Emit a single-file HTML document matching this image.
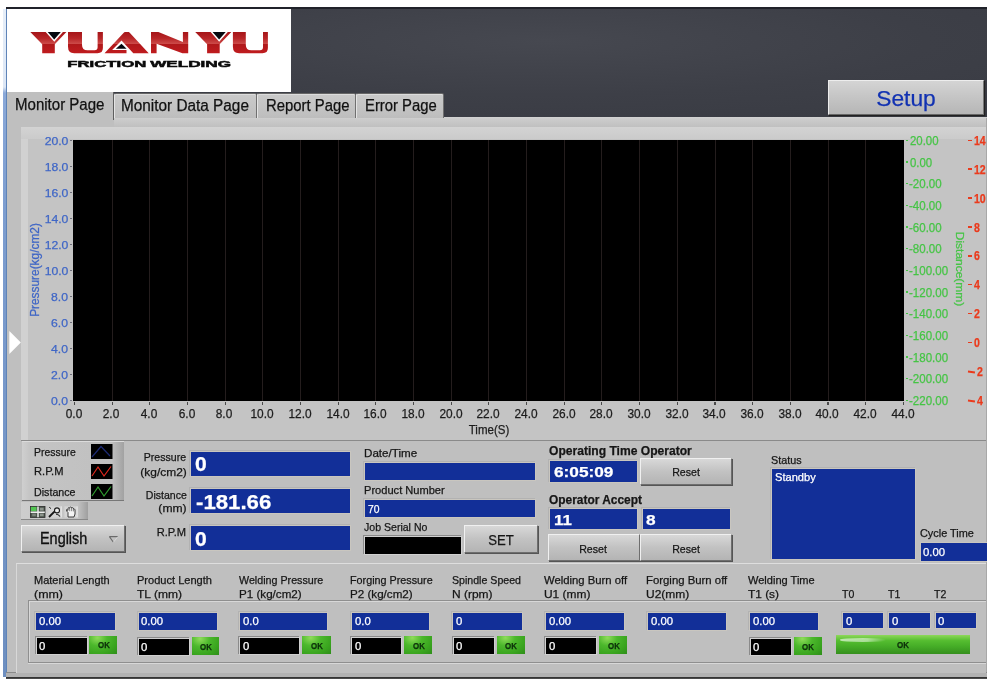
<!DOCTYPE html>
<html><head><meta charset="utf-8"><title>Yuan Yu Friction Welding</title>
<style>
html,body{margin:0;padding:0;background:#fff;}
body{width:990px;height:684px;position:relative;overflow:hidden;font-family:"Liberation Sans",sans-serif;}
div,span.t{position:absolute;box-sizing:border-box;}
span.t{white-space:nowrap;-webkit-text-stroke:0.25px currentColor;}
.blue{background:#122f98;box-shadow:0 0 0 1px #c9c6bf, -1px -1px 0 1px #b2b2b2;}
.blk{background:#000;box-shadow:0 0 0 1px #d0d0d0, -1px -1px 0 1px #8a8a8a;}
.btn{background:linear-gradient(#d8d8d8,#c2c2c2 50%,#b4b4b4);border:1px solid;border-color:#f0f0f0 #6e6e6e #6e6e6e #f0f0f0;box-shadow:1px 1px 0 #555;}
.ok{background:radial-gradient(ellipse at 30% 10%,#8fdc5a 0%,#4cb82c 35%,#3aa51f 70%,#2f8e1a 100%);}
.tab{background:linear-gradient(#cacaca,#c3c3c3 60%,#bdbdbd);border-left:1px solid #e4e4e4;border-top:1px solid #666;border-right:1px solid #707070;border-radius:2px 2px 0 0;box-shadow:inset 0 1px 0 #dcdcdc;}
#w{left:0;top:0;width:990px;height:684px;will-change:transform;filter:blur(0.45px);}
</style></head><body><div id="w">

<div class="" style="left:3.0px;top:9.0px;width:4.0px;height:668.0px;background:linear-gradient(#e6eef8 0px,#dde7f5 78px,#8aa8d8 84px,#7d9dcf 200px,#6e8fc0 100%);"></div>
<div class="" style="left:6.0px;top:9.0px;width:1.3px;height:668.0px;background:#5f84b8;"></div>
<div class="" style="left:6.0px;top:7.0px;width:981.3px;height:2.0px;background:#20222a;"></div>
<div class="" style="left:7.0px;top:9.0px;width:980.3px;height:108.0px;background:radial-gradient(ellipse at 55% 30%,#464850 0%,#3d3f47 50%,#383a42 100%);"></div>
<div class="" style="left:7.0px;top:9.0px;width:284.0px;height:83.3px;background:#fff;"></div>
<svg style="position:absolute;left:0;top:0" width="300" height="92" viewBox="0 0 300 92"><defs><linearGradient id="rg" x1="0" y1="32" x2="0" y2="53.4" gradientUnits="userSpaceOnUse"><stop offset="0" stop-color="#a51518"/><stop offset="0.3" stop-color="#b82628"/><stop offset="0.55" stop-color="#cc4a48"/><stop offset="0.58" stop-color="#b0181a"/><stop offset="1" stop-color="#c01c1f"/></linearGradient></defs><polygon points="30.3,32.0 45.7,32.0 54.3,41.7 62.9,32.0 66.4,32.0 54.8,44.2 54.8,53.3 42.2,53.3 42.2,44.2" fill="url(#rg)"/><polygon points="47.7,31.9 60.8,31.9 54.2,39.4" fill="#05080f"/><path d="M68.0,32 H82.0 V44.7 Q82.0,50.2 87.5,50.2 H94.6 Q97.6,50.2 97.6,47.2 V32 H102.9 V48 Q102.9,53.2 97.5,53.2 H74.2 Q68.0,53.2 68.0,46.8 Z" fill="url(#rg)"/><polygon points="104.5,53.3 124.0,32.4 124.9,32 128.7,32 129.5,32.4 148.7,53.3 133.3,53.3 121.5,40.4 112.1,50.0 126.5,50.0 126.5,53.3" fill="url(#rg)"/><polygon points="121.5,43.8 115.8,48.8 126.6,48.8" fill="#05080f"/><polygon points="151,32 158.4,32 182.9,41.9 182.9,32 188.2,32 188.2,53.3 182.4,53.3 156.6,43.7 156.6,53.3 151,53.3" fill="url(#rg)"/><polygon points="195.2,32.0 210.6,32.0 219.2,41.7 227.8,32.0 231.3,32.0 219.7,44.2 219.7,53.3 207.1,53.3 207.1,44.2" fill="url(#rg)"/><polygon points="212.6,31.9 225.7,31.9 219.1,39.4" fill="#05080f"/><path d="M232.9,32 H245.8 V44.7 Q245.8,50.2 251.3,50.2 H260.0 Q263.0,50.2 263.0,47.2 V32 H267.9 V48 Q267.9,53.2 262.5,53.2 H239.1 Q232.9,53.2 232.9,46.8 Z" fill="url(#rg)"/><text x="67.3" y="67.3" textLength="79" lengthAdjust="spacingAndGlyphs" font-family="Liberation Sans, sans-serif" font-weight="bold" font-size="9.6" fill="#0a0a0a" stroke="#0a0a0a" stroke-width="0.5">FRICTION</text><text x="150.2" y="67.3" textLength="80.8" lengthAdjust="spacingAndGlyphs" font-family="Liberation Sans, sans-serif" font-weight="bold" font-size="9.6" fill="#0a0a0a" stroke="#0a0a0a" stroke-width="0.5">WELDING</text></svg>
<div class="" style="left:7.0px;top:116.8px;width:980.3px;height:559.2px;background:#bfbfbf;"></div>
<div class="" style="left:7.0px;top:116.8px;width:980.3px;height:10.2px;background:linear-gradient(#d2d2d2 0,#cbcbcb 25%,#c0c0c0 100%);"></div>
<div class="" style="left:986.0px;top:118.0px;width:1.3px;height:558.0px;background:#a8a8a8;"></div>
<div class="" style="left:6.0px;top:672.0px;width:981.3px;height:1.0px;background:#8a8a8a;"></div>
<div class="" style="left:6.0px;top:673.0px;width:981.3px;height:3.5px;background:#b2b2b2;"></div>
<div class="" style="left:6.0px;top:676.5px;width:981.3px;height:2.0px;background:linear-gradient(#2a2a2a,#555);"></div>
<div class="" style="left:7.0px;top:92.3px;width:106.5px;height:34.7px;background:#bfbfbf;"></div>
<div class="" style="left:112.7px;top:92.3px;width:1.0px;height:28.2px;background:#5e5e5e;"></div>
<div class="tab" style="left:114.2px;top:93.0px;width:142.4px;height:25.0px;"></div>
<div class="tab" style="left:257.0px;top:93.0px;width:98.8px;height:25.0px;"></div>
<div class="tab" style="left:356.2px;top:93.0px;width:87.6px;height:25.0px;"></div>
<span class="t" style="left:14.5px;top:94.7px;font-size:16px;line-height:19.2px;color:#111;font-weight:normal;transform:scaleX(0.940);transform-origin:0 50%;">Monitor Page</span>
<span class="t" style="left:121.0px;top:96.2px;font-size:16px;line-height:19.2px;color:#111;font-weight:normal;transform:scaleX(0.959);transform-origin:0 50%;">Monitor Data Page</span>
<span class="t" style="left:265.5px;top:96.2px;font-size:16px;line-height:19.2px;color:#111;font-weight:normal;transform:scaleX(0.929);transform-origin:0 50%;">Report Page</span>
<span class="t" style="left:364.7px;top:96.2px;font-size:16px;line-height:19.2px;color:#111;font-weight:normal;transform:scaleX(0.927);transform-origin:0 50%;">Error Page</span>
<div class="" style="left:828.0px;top:79.5px;width:156.0px;height:35.5px;background:linear-gradient(#d4d4d4,#c6c6c6 45%,#b6b6b6);border:1px solid;border-color:#ededed #777 #666 #ededed;box-shadow:1px 1px 1px #222;"></div>
<span class="t" style="left:806.2px;width:200px;text-align:center;top:87.1px;font-size:21.5px;line-height:25.8px;color:#1232b2;font-weight:normal;transform:scaleX(1.059);transform-origin:50% 50%;">Setup</span>
<div class="" style="left:20.5px;top:127.0px;width:965.5px;height:314.0px;background:#c4c4c4;border-bottom:1px solid #8a8a8a;"></div>
<div class="" style="left:20.5px;top:127.0px;width:7.8px;height:313.0px;background:#d1d1d1;"></div>
<div class="" style="left:20.5px;top:127.0px;width:965.5px;height:12.0px;background:linear-gradient(#d3d3d3,#cbcbcb);"></div>
<div class="" style="left:73.1px;top:139.6px;width:831.1px;height:261.2px;background:#000;"></div>
<div class="" style="left:111.6px;top:139.6px;width:1.0px;height:261.2px;background:#241d1d;"></div>
<div class="" style="left:149.3px;top:139.6px;width:1.0px;height:261.2px;background:#241d1d;"></div>
<div class="" style="left:186.9px;top:139.6px;width:1.0px;height:261.2px;background:#241d1d;"></div>
<div class="" style="left:224.6px;top:139.6px;width:1.0px;height:261.2px;background:#241d1d;"></div>
<div class="" style="left:262.3px;top:139.6px;width:1.0px;height:261.2px;background:#241d1d;"></div>
<div class="" style="left:300.0px;top:139.6px;width:1.0px;height:261.2px;background:#241d1d;"></div>
<div class="" style="left:337.7px;top:139.6px;width:1.0px;height:261.2px;background:#241d1d;"></div>
<div class="" style="left:375.3px;top:139.6px;width:1.0px;height:261.2px;background:#241d1d;"></div>
<div class="" style="left:413.0px;top:139.6px;width:1.0px;height:261.2px;background:#241d1d;"></div>
<div class="" style="left:450.7px;top:139.6px;width:1.0px;height:261.2px;background:#241d1d;"></div>
<div class="" style="left:488.4px;top:139.6px;width:1.0px;height:261.2px;background:#241d1d;"></div>
<div class="" style="left:526.1px;top:139.6px;width:1.0px;height:261.2px;background:#241d1d;"></div>
<div class="" style="left:563.7px;top:139.6px;width:1.0px;height:261.2px;background:#241d1d;"></div>
<div class="" style="left:601.4px;top:139.6px;width:1.0px;height:261.2px;background:#241d1d;"></div>
<div class="" style="left:639.1px;top:139.6px;width:1.0px;height:261.2px;background:#241d1d;"></div>
<div class="" style="left:676.8px;top:139.6px;width:1.0px;height:261.2px;background:#241d1d;"></div>
<div class="" style="left:714.5px;top:139.6px;width:1.0px;height:261.2px;background:#241d1d;"></div>
<div class="" style="left:752.1px;top:139.6px;width:1.0px;height:261.2px;background:#241d1d;"></div>
<div class="" style="left:789.8px;top:139.6px;width:1.0px;height:261.2px;background:#241d1d;"></div>
<div class="" style="left:827.5px;top:139.6px;width:1.0px;height:261.2px;background:#241d1d;"></div>
<div class="" style="left:865.2px;top:139.6px;width:1.0px;height:261.2px;background:#241d1d;"></div>
<span class="t" style="right:922.1px;top:134.7px;font-size:11.5px;line-height:13.8px;color:#3f66c6;font-weight:normal;transform:scaleX(1.060);transform-origin:100% 50%;">20.0</span>
<div class="" style="left:69.8px;top:140.0px;width:1.8px;height:1.2px;background:#70707c;"></div>
<span class="t" style="right:922.1px;top:160.7px;font-size:11.5px;line-height:13.8px;color:#3f66c6;font-weight:normal;transform:scaleX(1.060);transform-origin:100% 50%;">18.0</span>
<div class="" style="left:69.8px;top:166.0px;width:1.8px;height:1.2px;background:#70707c;"></div>
<span class="t" style="right:922.1px;top:186.7px;font-size:11.5px;line-height:13.8px;color:#3f66c6;font-weight:normal;transform:scaleX(1.060);transform-origin:100% 50%;">16.0</span>
<div class="" style="left:69.8px;top:192.0px;width:1.8px;height:1.2px;background:#70707c;"></div>
<span class="t" style="right:922.1px;top:212.7px;font-size:11.5px;line-height:13.8px;color:#3f66c6;font-weight:normal;transform:scaleX(1.060);transform-origin:100% 50%;">14.0</span>
<div class="" style="left:69.8px;top:218.0px;width:1.8px;height:1.2px;background:#70707c;"></div>
<span class="t" style="right:922.1px;top:238.7px;font-size:11.5px;line-height:13.8px;color:#3f66c6;font-weight:normal;transform:scaleX(1.060);transform-origin:100% 50%;">12.0</span>
<div class="" style="left:69.8px;top:244.0px;width:1.8px;height:1.2px;background:#70707c;"></div>
<span class="t" style="right:922.1px;top:264.7px;font-size:11.5px;line-height:13.8px;color:#3f66c6;font-weight:normal;transform:scaleX(1.060);transform-origin:100% 50%;">10.0</span>
<div class="" style="left:69.8px;top:270.0px;width:1.8px;height:1.2px;background:#70707c;"></div>
<span class="t" style="right:922.1px;top:290.7px;font-size:11.5px;line-height:13.8px;color:#3f66c6;font-weight:normal;transform:scaleX(1.060);transform-origin:100% 50%;">8.0</span>
<div class="" style="left:69.8px;top:296.0px;width:1.8px;height:1.2px;background:#70707c;"></div>
<span class="t" style="right:922.1px;top:316.7px;font-size:11.5px;line-height:13.8px;color:#3f66c6;font-weight:normal;transform:scaleX(1.060);transform-origin:100% 50%;">6.0</span>
<div class="" style="left:69.8px;top:322.0px;width:1.8px;height:1.2px;background:#70707c;"></div>
<span class="t" style="right:922.1px;top:342.7px;font-size:11.5px;line-height:13.8px;color:#3f66c6;font-weight:normal;transform:scaleX(1.060);transform-origin:100% 50%;">4.0</span>
<div class="" style="left:69.8px;top:348.0px;width:1.8px;height:1.2px;background:#70707c;"></div>
<span class="t" style="right:922.1px;top:368.7px;font-size:11.5px;line-height:13.8px;color:#3f66c6;font-weight:normal;transform:scaleX(1.060);transform-origin:100% 50%;">2.0</span>
<div class="" style="left:69.8px;top:374.0px;width:1.8px;height:1.2px;background:#70707c;"></div>
<span class="t" style="right:922.1px;top:394.7px;font-size:11.5px;line-height:13.8px;color:#3f66c6;font-weight:normal;transform:scaleX(1.060);transform-origin:100% 50%;">0.0</span>
<div class="" style="left:69.8px;top:400.0px;width:1.8px;height:1.2px;background:#70707c;"></div>
<span class="t" style="left:-26.3px;width:200px;text-align:center;top:406.5px;font-size:12.5px;line-height:15.0px;color:#1c1c1c;font-weight:normal;transform:scaleX(0.950);transform-origin:50% 50%;">0.0</span>
<div class="" style="left:73.8px;top:401.6px;width:1.2px;height:3.8px;background:#4a4a4a;"></div>
<span class="t" style="left:11.4px;width:200px;text-align:center;top:406.5px;font-size:12.5px;line-height:15.0px;color:#1c1c1c;font-weight:normal;transform:scaleX(0.950);transform-origin:50% 50%;">2.0</span>
<div class="" style="left:111.5px;top:401.6px;width:1.2px;height:3.8px;background:#4a4a4a;"></div>
<span class="t" style="left:49.1px;width:200px;text-align:center;top:406.5px;font-size:12.5px;line-height:15.0px;color:#1c1c1c;font-weight:normal;transform:scaleX(0.950);transform-origin:50% 50%;">4.0</span>
<div class="" style="left:149.2px;top:401.6px;width:1.2px;height:3.8px;background:#4a4a4a;"></div>
<span class="t" style="left:86.7px;width:200px;text-align:center;top:406.5px;font-size:12.5px;line-height:15.0px;color:#1c1c1c;font-weight:normal;transform:scaleX(0.950);transform-origin:50% 50%;">6.0</span>
<div class="" style="left:186.8px;top:401.6px;width:1.2px;height:3.8px;background:#4a4a4a;"></div>
<span class="t" style="left:124.4px;width:200px;text-align:center;top:406.5px;font-size:12.5px;line-height:15.0px;color:#1c1c1c;font-weight:normal;transform:scaleX(0.950);transform-origin:50% 50%;">8.0</span>
<div class="" style="left:224.5px;top:401.6px;width:1.2px;height:3.8px;background:#4a4a4a;"></div>
<span class="t" style="left:162.1px;width:200px;text-align:center;top:406.5px;font-size:12.5px;line-height:15.0px;color:#1c1c1c;font-weight:normal;transform:scaleX(0.950);transform-origin:50% 50%;">10.0</span>
<div class="" style="left:262.2px;top:401.6px;width:1.2px;height:3.8px;background:#4a4a4a;"></div>
<span class="t" style="left:199.8px;width:200px;text-align:center;top:406.5px;font-size:12.5px;line-height:15.0px;color:#1c1c1c;font-weight:normal;transform:scaleX(0.950);transform-origin:50% 50%;">12.0</span>
<div class="" style="left:299.9px;top:401.6px;width:1.2px;height:3.8px;background:#4a4a4a;"></div>
<span class="t" style="left:237.5px;width:200px;text-align:center;top:406.5px;font-size:12.5px;line-height:15.0px;color:#1c1c1c;font-weight:normal;transform:scaleX(0.950);transform-origin:50% 50%;">14.0</span>
<div class="" style="left:337.6px;top:401.6px;width:1.2px;height:3.8px;background:#4a4a4a;"></div>
<span class="t" style="left:275.1px;width:200px;text-align:center;top:406.5px;font-size:12.5px;line-height:15.0px;color:#1c1c1c;font-weight:normal;transform:scaleX(0.950);transform-origin:50% 50%;">16.0</span>
<div class="" style="left:375.2px;top:401.6px;width:1.2px;height:3.8px;background:#4a4a4a;"></div>
<span class="t" style="left:312.8px;width:200px;text-align:center;top:406.5px;font-size:12.5px;line-height:15.0px;color:#1c1c1c;font-weight:normal;transform:scaleX(0.950);transform-origin:50% 50%;">18.0</span>
<div class="" style="left:412.9px;top:401.6px;width:1.2px;height:3.8px;background:#4a4a4a;"></div>
<span class="t" style="left:350.5px;width:200px;text-align:center;top:406.5px;font-size:12.5px;line-height:15.0px;color:#1c1c1c;font-weight:normal;transform:scaleX(0.950);transform-origin:50% 50%;">20.0</span>
<div class="" style="left:450.6px;top:401.6px;width:1.2px;height:3.8px;background:#4a4a4a;"></div>
<span class="t" style="left:388.2px;width:200px;text-align:center;top:406.5px;font-size:12.5px;line-height:15.0px;color:#1c1c1c;font-weight:normal;transform:scaleX(0.950);transform-origin:50% 50%;">22.0</span>
<div class="" style="left:488.3px;top:401.6px;width:1.2px;height:3.8px;background:#4a4a4a;"></div>
<span class="t" style="left:425.9px;width:200px;text-align:center;top:406.5px;font-size:12.5px;line-height:15.0px;color:#1c1c1c;font-weight:normal;transform:scaleX(0.950);transform-origin:50% 50%;">24.0</span>
<div class="" style="left:526.0px;top:401.6px;width:1.2px;height:3.8px;background:#4a4a4a;"></div>
<span class="t" style="left:463.5px;width:200px;text-align:center;top:406.5px;font-size:12.5px;line-height:15.0px;color:#1c1c1c;font-weight:normal;transform:scaleX(0.950);transform-origin:50% 50%;">26.0</span>
<div class="" style="left:563.6px;top:401.6px;width:1.2px;height:3.8px;background:#4a4a4a;"></div>
<span class="t" style="left:501.2px;width:200px;text-align:center;top:406.5px;font-size:12.5px;line-height:15.0px;color:#1c1c1c;font-weight:normal;transform:scaleX(0.950);transform-origin:50% 50%;">28.0</span>
<div class="" style="left:601.3px;top:401.6px;width:1.2px;height:3.8px;background:#4a4a4a;"></div>
<span class="t" style="left:538.9px;width:200px;text-align:center;top:406.5px;font-size:12.5px;line-height:15.0px;color:#1c1c1c;font-weight:normal;transform:scaleX(0.950);transform-origin:50% 50%;">30.0</span>
<div class="" style="left:639.0px;top:401.6px;width:1.2px;height:3.8px;background:#4a4a4a;"></div>
<span class="t" style="left:576.6px;width:200px;text-align:center;top:406.5px;font-size:12.5px;line-height:15.0px;color:#1c1c1c;font-weight:normal;transform:scaleX(0.950);transform-origin:50% 50%;">32.0</span>
<div class="" style="left:676.7px;top:401.6px;width:1.2px;height:3.8px;background:#4a4a4a;"></div>
<span class="t" style="left:614.3px;width:200px;text-align:center;top:406.5px;font-size:12.5px;line-height:15.0px;color:#1c1c1c;font-weight:normal;transform:scaleX(0.950);transform-origin:50% 50%;">34.0</span>
<div class="" style="left:714.4px;top:401.6px;width:1.2px;height:3.8px;background:#4a4a4a;"></div>
<span class="t" style="left:651.9px;width:200px;text-align:center;top:406.5px;font-size:12.5px;line-height:15.0px;color:#1c1c1c;font-weight:normal;transform:scaleX(0.950);transform-origin:50% 50%;">36.0</span>
<div class="" style="left:752.0px;top:401.6px;width:1.2px;height:3.8px;background:#4a4a4a;"></div>
<span class="t" style="left:689.6px;width:200px;text-align:center;top:406.5px;font-size:12.5px;line-height:15.0px;color:#1c1c1c;font-weight:normal;transform:scaleX(0.950);transform-origin:50% 50%;">38.0</span>
<div class="" style="left:789.7px;top:401.6px;width:1.2px;height:3.8px;background:#4a4a4a;"></div>
<span class="t" style="left:727.3px;width:200px;text-align:center;top:406.5px;font-size:12.5px;line-height:15.0px;color:#1c1c1c;font-weight:normal;transform:scaleX(0.950);transform-origin:50% 50%;">40.0</span>
<div class="" style="left:827.4px;top:401.6px;width:1.2px;height:3.8px;background:#4a4a4a;"></div>
<span class="t" style="left:765.0px;width:200px;text-align:center;top:406.5px;font-size:12.5px;line-height:15.0px;color:#1c1c1c;font-weight:normal;transform:scaleX(0.950);transform-origin:50% 50%;">42.0</span>
<div class="" style="left:865.1px;top:401.6px;width:1.2px;height:3.8px;background:#4a4a4a;"></div>
<span class="t" style="left:802.7px;width:200px;text-align:center;top:406.5px;font-size:12.5px;line-height:15.0px;color:#1c1c1c;font-weight:normal;transform:scaleX(0.950);transform-origin:50% 50%;">44.0</span>
<div class="" style="left:902.8px;top:401.6px;width:1.2px;height:3.8px;background:#4a4a4a;"></div>
<span class="t" style="left:389.0px;width:200px;text-align:center;top:422.5px;font-size:12.5px;line-height:15.0px;color:#1c1c1c;font-weight:normal;transform:scaleX(0.921);transform-origin:50% 50%;">Time(S)</span>
<span class="t" style="left:910.2px;top:133.8px;font-size:12px;line-height:14.4px;color:#45c445;font-weight:normal;transform:scaleX(0.950);transform-origin:0 50%;">20.00</span>
<div class="" style="left:906.3px;top:139.7px;width:1.7px;height:1.2px;background:#45c445;"></div>
<span class="t" style="left:910.2px;top:155.5px;font-size:12px;line-height:14.4px;color:#45c445;font-weight:normal;transform:scaleX(0.950);transform-origin:0 50%;">0.00</span>
<div class="" style="left:906.3px;top:161.4px;width:1.7px;height:1.2px;background:#45c445;"></div>
<span class="t" style="left:909.3px;top:177.1px;font-size:12px;line-height:14.4px;color:#45c445;font-weight:normal;transform:scaleX(0.960);transform-origin:0 50%;">-20.00</span>
<div class="" style="left:906.3px;top:183.0px;width:1.7px;height:1.2px;background:#45c445;"></div>
<span class="t" style="left:909.3px;top:198.8px;font-size:12px;line-height:14.4px;color:#45c445;font-weight:normal;transform:scaleX(0.960);transform-origin:0 50%;">-40.00</span>
<div class="" style="left:906.3px;top:204.7px;width:1.7px;height:1.2px;background:#45c445;"></div>
<span class="t" style="left:909.3px;top:220.5px;font-size:12px;line-height:14.4px;color:#45c445;font-weight:normal;transform:scaleX(0.960);transform-origin:0 50%;">-60.00</span>
<div class="" style="left:906.3px;top:226.4px;width:1.7px;height:1.2px;background:#45c445;"></div>
<span class="t" style="left:909.3px;top:242.1px;font-size:12px;line-height:14.4px;color:#45c445;font-weight:normal;transform:scaleX(0.960);transform-origin:0 50%;">-80.00</span>
<div class="" style="left:906.3px;top:248.0px;width:1.7px;height:1.2px;background:#45c445;"></div>
<span class="t" style="left:909.3px;top:263.8px;font-size:12px;line-height:14.4px;color:#45c445;font-weight:normal;transform:scaleX(0.960);transform-origin:0 50%;">-100.00</span>
<div class="" style="left:906.3px;top:269.7px;width:1.7px;height:1.2px;background:#45c445;"></div>
<span class="t" style="left:909.3px;top:285.5px;font-size:12px;line-height:14.4px;color:#45c445;font-weight:normal;transform:scaleX(0.960);transform-origin:0 50%;">-120.00</span>
<div class="" style="left:906.3px;top:291.4px;width:1.7px;height:1.2px;background:#45c445;"></div>
<span class="t" style="left:909.3px;top:307.1px;font-size:12px;line-height:14.4px;color:#45c445;font-weight:normal;transform:scaleX(0.960);transform-origin:0 50%;">-140.00</span>
<div class="" style="left:906.3px;top:313.0px;width:1.7px;height:1.2px;background:#45c445;"></div>
<span class="t" style="left:909.3px;top:328.8px;font-size:12px;line-height:14.4px;color:#45c445;font-weight:normal;transform:scaleX(0.960);transform-origin:0 50%;">-160.00</span>
<div class="" style="left:906.3px;top:334.7px;width:1.7px;height:1.2px;background:#45c445;"></div>
<span class="t" style="left:909.3px;top:350.5px;font-size:12px;line-height:14.4px;color:#45c445;font-weight:normal;transform:scaleX(0.960);transform-origin:0 50%;">-180.00</span>
<div class="" style="left:906.3px;top:356.4px;width:1.7px;height:1.2px;background:#45c445;"></div>
<span class="t" style="left:909.3px;top:372.1px;font-size:12px;line-height:14.4px;color:#45c445;font-weight:normal;transform:scaleX(0.960);transform-origin:0 50%;">-200.00</span>
<div class="" style="left:906.3px;top:378.0px;width:1.7px;height:1.2px;background:#45c445;"></div>
<span class="t" style="left:909.3px;top:393.8px;font-size:12px;line-height:14.4px;color:#45c445;font-weight:normal;transform:scaleX(0.960);transform-origin:0 50%;">-220.00</span>
<div class="" style="left:906.3px;top:399.7px;width:1.7px;height:1.2px;background:#45c445;"></div>
<div class="" style="left:968.3px;top:139.5px;width:3.3px;height:1.6px;background:#ea3a1c;"></div>
<span class="t" style="left:973.6px;top:133.8px;font-size:12px;line-height:14.4px;color:#ea3a1c;font-weight:bold;transform:scaleX(0.880);transform-origin:0 50%;">14</span>
<div class="" style="left:968.3px;top:168.4px;width:3.3px;height:1.6px;background:#ea3a1c;"></div>
<span class="t" style="left:973.6px;top:162.7px;font-size:12px;line-height:14.4px;color:#ea3a1c;font-weight:bold;transform:scaleX(0.880);transform-origin:0 50%;">12</span>
<div class="" style="left:968.3px;top:197.3px;width:3.3px;height:1.6px;background:#ea3a1c;"></div>
<span class="t" style="left:973.6px;top:191.6px;font-size:12px;line-height:14.4px;color:#ea3a1c;font-weight:bold;transform:scaleX(0.880);transform-origin:0 50%;">10</span>
<div class="" style="left:968.3px;top:226.2px;width:3.3px;height:1.6px;background:#ea3a1c;"></div>
<span class="t" style="left:973.6px;top:220.5px;font-size:12px;line-height:14.4px;color:#ea3a1c;font-weight:bold;transform:scaleX(0.880);transform-origin:0 50%;">8</span>
<div class="" style="left:968.3px;top:255.1px;width:3.3px;height:1.6px;background:#ea3a1c;"></div>
<span class="t" style="left:973.6px;top:249.4px;font-size:12px;line-height:14.4px;color:#ea3a1c;font-weight:bold;transform:scaleX(0.880);transform-origin:0 50%;">6</span>
<div class="" style="left:968.3px;top:283.9px;width:3.3px;height:1.6px;background:#ea3a1c;"></div>
<span class="t" style="left:973.6px;top:278.2px;font-size:12px;line-height:14.4px;color:#ea3a1c;font-weight:bold;transform:scaleX(0.880);transform-origin:0 50%;">4</span>
<div class="" style="left:968.3px;top:312.8px;width:3.3px;height:1.6px;background:#ea3a1c;"></div>
<span class="t" style="left:973.6px;top:307.1px;font-size:12px;line-height:14.4px;color:#ea3a1c;font-weight:bold;transform:scaleX(0.880);transform-origin:0 50%;">2</span>
<div class="" style="left:968.3px;top:341.7px;width:3.3px;height:1.6px;background:#ea3a1c;"></div>
<span class="t" style="left:973.6px;top:336.0px;font-size:12px;line-height:14.4px;color:#ea3a1c;font-weight:bold;transform:scaleX(0.880);transform-origin:0 50%;">0</span>
<div class="" style="left:968.3px;top:370.6px;width:3.3px;height:1.6px;background:#ea3a1c;"></div>
<div class="" style="left:968.3px;top:370.6px;width:7.2px;height:1.6px;background:#ea3a1c;transform:rotate(8deg);"></div>
<span class="t" style="left:977.0px;top:364.9px;font-size:12px;line-height:14.4px;color:#ea3a1c;font-weight:bold;transform:scaleX(0.880);transform-origin:0 50%;">2</span>
<div class="" style="left:968.3px;top:399.5px;width:3.3px;height:1.6px;background:#ea3a1c;"></div>
<div class="" style="left:968.3px;top:399.5px;width:7.2px;height:1.6px;background:#ea3a1c;transform:rotate(8deg);"></div>
<span class="t" style="left:977.0px;top:393.8px;font-size:12px;line-height:14.4px;color:#ea3a1c;font-weight:bold;transform:scaleX(0.880);transform-origin:0 50%;">4</span>
<span class="t" style="left:35px;top:270px;font-size:12px;line-height:14px;color:#3f66c6;transform:translate(-50%,-50%) rotate(-90deg) scaleX(0.99);">Pressure(kg/cm2)</span>
<span class="t" style="left:959.5px;top:268.5px;font-size:11.5px;line-height:14px;color:#45c445;transform:translate(-50%,-50%) rotate(90deg) scaleX(1.04);">Distance(mm)</span>
<svg style="position:absolute;left:9px;top:331px" width="12" height="23"><path d="M0.3,0 L11.8,11.5 L0.3,23 Z" fill="#fff"/></svg>
<div class="" style="left:21.5px;top:441.4px;width:102.5px;height:59.6px;background:linear-gradient(90deg,#cfcfcf 0,#c4c4c4 8%,#c0c0c0 88%,#a2a2a2 100%);border-bottom:1px solid #777;border-top:1px solid #dcdcdc;"></div>
<span class="t" style="left:34.0px;top:446.1px;font-size:11px;line-height:13.2px;color:#161616;font-weight:normal;transform:scaleX(0.947);transform-origin:0 50%;">Pressure</span>
<svg style="position:absolute;left:91px;top:443.6px" width="21.5" height="15.4"><rect width="21.5" height="15.4" fill="#000"/><polyline points="1,13 10,2.5 19,12" fill="none" stroke="#1c2a74" stroke-width="1.2"/></svg>
<span class="t" style="left:34.0px;top:465.4px;font-size:11px;line-height:13.2px;color:#161616;font-weight:normal;transform:scaleX(1.012);transform-origin:0 50%;">R.P.M</span>
<svg style="position:absolute;left:91px;top:463.7px" width="21.5" height="15.3"><rect width="21.5" height="15.3" fill="#000"/><polyline points="1,12 7,3 13,12 20,2.5" fill="none" stroke="#e0281e" stroke-width="1.2"/></svg>
<span class="t" style="left:34.0px;top:485.9px;font-size:11px;line-height:13.2px;color:#161616;font-weight:normal;transform:scaleX(0.970);transform-origin:0 50%;">Distance</span>
<svg style="position:absolute;left:91px;top:483.5px" width="21.5" height="15.5"><rect width="21.5" height="15.5" fill="#000"/><polyline points="1,12 7,3 13,12 20,2.5" fill="none" stroke="#2f9e2f" stroke-width="1.2"/></svg>
<div class="" style="left:20.5px;top:502.0px;width:67.9px;height:18.0px;background:linear-gradient(90deg,#cdcdcd 0,#c2c2c2 85%,#9f9f9f 100%);border-bottom:1px solid #888;"></div>
<svg style="position:absolute;left:30px;top:506px" width="48" height="12" viewBox="0 0 48 12">
<rect x="0.4" y="0.4" width="14.6" height="11" fill="#4d554d" stroke="#2c2c2c" stroke-width="0.8"/><rect x="0.9" y="0.9" width="5.6" height="4.3" fill="#52c452"/><rect x="10" y="1.8" width="3.6" height="2.8" fill="#8d958d"/><rect x="10" y="7.6" width="3.6" height="2.6" fill="#8d958d"/><rect x="2.2" y="7.6" width="3.6" height="2.6" fill="#7c847c"/><path d="M8,0.6V11.2M0.6,6.2H14.8" stroke="#ededed" stroke-width="1.5"/>
<rect x="18.5" y="0.3" width="12.6" height="11.2" fill="#d3d3d3"/><path d="M31.3,0.3V11.5" stroke="#f2f2f2" stroke-width="0.8"/><path d="M19,11 L25.2,4.8" stroke="#161616" stroke-width="1.9"/><circle cx="27" cy="4.4" r="2.5" fill="#ececec" stroke="#1a1a1a" stroke-width="1.1"/><path d="M26,8.2 Q28.5,8 30,10.6" stroke="#222" stroke-width="1.1" fill="none"/><path d="M19.2,1.2 L21,2.6" stroke="#222" stroke-width="1"/>
<rect x="34.4" y="0.3" width="12.8" height="11.2" fill="#d5d5d5"/><path d="M47.2,0.3V11.5" stroke="#f2f2f2" stroke-width="0.8"/><path d="M38,11 V6.5 L36.6,5 V3.6 L38,4.4 V2.2 Q38.8,1.2 39.6,2.2 V1.6 Q40.6,0.6 41.6,1.6 V2 Q42.6,1.2 43.4,2.2 V3 Q44.6,2.6 45,3.8 V8 L44,11 Z" fill="#f4f4f4" stroke="#2a2a2a" stroke-width="0.9"/><path d="M39.7,2.2V5.2M41.6,2V5.2M43.4,3V5.4" stroke="#555" stroke-width="0.7"/>
</svg>
<div class="btn" style="left:20.5px;top:525.0px;width:104.1px;height:27.0px;"></div>
<span class="t" style="left:40.0px;top:528.7px;font-size:16px;line-height:19.2px;color:#111;font-weight:normal;transform:scaleX(0.901);transform-origin:0 50%;-webkit-text-stroke:0.35px #111;">English</span>
<svg style="position:absolute;left:108px;top:534px" width="12" height="10"><path d="M1.2,2.6 H9.6 M1.4,2.6 L5.2,8" fill="none" stroke="#6a6a6a" stroke-width="1.1"/><path d="M9.6,3 L5.6,8" fill="none" stroke="#d8d8d8" stroke-width="0.9"/></svg>
<div class="blue" style="left:191.0px;top:451.5px;width:158.8px;height:24.5px;"></div>
<div class="blue" style="left:191.0px;top:488.5px;width:158.8px;height:24.5px;"></div>
<div class="blue" style="left:191.0px;top:525.7px;width:158.8px;height:24.5px;"></div>
<span class="t" style="right:803.7px;top:451.1px;font-size:11px;line-height:13.2px;color:#161616;font-weight:normal;transform:scaleX(0.959);transform-origin:100% 50%;">Pressure</span>
<span class="t" style="right:803.7px;top:465.6px;font-size:11px;line-height:13.2px;color:#161616;font-weight:normal;transform:scaleX(1.085);transform-origin:100% 50%;">(kg/cm2)</span>
<span class="t" style="right:803.7px;top:488.6px;font-size:11px;line-height:13.2px;color:#161616;font-weight:normal;transform:scaleX(0.958);transform-origin:100% 50%;">Distance</span>
<span class="t" style="right:803.7px;top:501.8px;font-size:11px;line-height:13.2px;color:#161616;font-weight:normal;transform:scaleX(1.103);transform-origin:100% 50%;">(mm)</span>
<span class="t" style="right:803.7px;top:525.5px;font-size:11px;line-height:13.2px;color:#161616;font-weight:normal;transform:scaleX(1.012);transform-origin:100% 50%;">R.P.M</span>
<span class="t" style="left:195.0px;top:453.3px;font-size:19.5px;line-height:23.4px;color:#fff;font-weight:bold;transform:scaleX(1.079);transform-origin:0 50%;">0</span>
<span class="t" style="left:195.7px;top:490.5px;font-size:19.5px;line-height:23.4px;color:#fff;font-weight:bold;transform:scaleX(1.139);transform-origin:0 50%;">-181.66</span>
<span class="t" style="left:195.0px;top:527.6px;font-size:19.5px;line-height:23.4px;color:#fff;font-weight:bold;transform:scaleX(1.079);transform-origin:0 50%;">0</span>
<span class="t" style="left:363.6px;top:447.1px;font-size:11px;line-height:13.2px;color:#161616;font-weight:normal;transform:scaleX(1.057);transform-origin:0 50%;">Date/Time</span>
<div class="blue" style="left:365.0px;top:463.0px;width:170.0px;height:16.8px;"></div>
<span class="t" style="left:363.6px;top:484.3px;font-size:11px;line-height:13.2px;color:#161616;font-weight:normal;transform:scaleX(1.008);transform-origin:0 50%;">Product Number</span>
<div class="blue" style="left:365.0px;top:500.0px;width:170.0px;height:16.8px;"></div>
<span class="t" style="left:367.5px;top:502.5px;font-size:11px;line-height:13.2px;color:#fff;font-weight:normal;transform:scaleX(0.940);transform-origin:0 50%;">70</span>
<span class="t" style="left:363.6px;top:521.4px;font-size:11px;line-height:13.2px;color:#161616;font-weight:normal;transform:scaleX(0.960);transform-origin:0 50%;">Job Serial No</span>
<div class="blk" style="left:365.0px;top:537.2px;width:95.6px;height:16.5px;"></div>
<div class="btn" style="left:464.4px;top:525.3px;width:73.3px;height:27.4px;"></div>
<span class="t" style="left:401.2px;width:200px;text-align:center;top:530.9px;font-size:15px;line-height:18.0px;color:#161616;font-weight:normal;transform:scaleX(0.877);transform-origin:50% 50%;">SET</span>
<span class="t" style="left:549.1px;top:444.0px;font-size:12px;line-height:14.4px;color:#161616;font-weight:bold;transform:scaleX(1.007);transform-origin:0 50%;">Operating Time Operator</span>
<div class="blue" style="left:550.1px;top:460.6px;width:86.9px;height:21.9px;"></div>
<span class="t" style="left:553.7px;top:462.9px;font-size:15.2px;line-height:18.2px;color:#fff;font-weight:bold;transform:scaleX(1.134);transform-origin:0 50%;">6:05:09</span>
<div class="btn" style="left:640.4px;top:458.2px;width:91.9px;height:26.8px;"></div>
<span class="t" style="left:586.2px;width:200px;text-align:center;top:466.4px;font-size:11px;line-height:13.2px;color:#161616;font-weight:normal;transform:scaleX(0.964);transform-origin:50% 50%;">Reset</span>
<span class="t" style="left:549.1px;top:493.1px;font-size:12px;line-height:14.4px;color:#161616;font-weight:bold;transform:scaleX(0.993);transform-origin:0 50%;">Operator Accept</span>
<div class="blue" style="left:550.1px;top:509.3px;width:86.9px;height:20.0px;"></div>
<div class="blue" style="left:643.0px;top:509.3px;width:87.0px;height:20.0px;"></div>
<span class="t" style="left:554.1px;top:511.4px;font-size:15.2px;line-height:18.2px;color:#fff;font-weight:bold;transform:scaleX(1.108);transform-origin:0 50%;">11</span>
<span class="t" style="left:646.0px;top:511.4px;font-size:15.2px;line-height:18.2px;color:#fff;font-weight:bold;transform:scaleX(1.136);transform-origin:0 50%;">8</span>
<div class="btn" style="left:547.7px;top:534.4px;width:91.9px;height:26.8px;"></div>
<div class="btn" style="left:640.4px;top:534.4px;width:91.9px;height:26.8px;"></div>
<span class="t" style="left:493.4px;width:200px;text-align:center;top:542.8px;font-size:11px;line-height:13.2px;color:#161616;font-weight:normal;transform:scaleX(0.964);transform-origin:50% 50%;">Reset</span>
<span class="t" style="left:586.2px;width:200px;text-align:center;top:542.8px;font-size:11px;line-height:13.2px;color:#161616;font-weight:normal;transform:scaleX(0.964);transform-origin:50% 50%;">Reset</span>
<span class="t" style="left:771.2px;top:454.2px;font-size:11px;line-height:13.2px;color:#161616;font-weight:normal;transform:scaleX(0.981);transform-origin:0 50%;">Status</span>
<div class="blue" style="left:772.2px;top:469.0px;width:142.8px;height:89.8px;"></div>
<span class="t" style="left:775.1px;top:471.4px;font-size:11px;line-height:13.2px;color:#fff;font-weight:normal;transform:scaleX(1.008);transform-origin:0 50%;">Standby</span>
<span class="t" style="left:919.9px;top:527.4px;font-size:11px;line-height:13.2px;color:#161616;font-weight:normal;transform:scaleX(0.991);transform-origin:0 50%;">Cycle Time</span>
<div class="" style="left:920.8px;top:543.0px;width:65.8px;height:17.5px;background:#122f98;box-shadow:-1px 0 0 #c9c6bf,0 -1px 0 #c9c6bf,0 1px 0 #c9c6bf,-1px -1px 0 #c9c6bf,-1px 1px 0 #c9c6bf;"></div>
<span class="t" style="left:923.1px;top:545.8px;font-size:11px;line-height:13.2px;color:#fff;font-weight:normal;transform:scaleX(1.032);transform-origin:0 50%;">0.00</span>
<div class="" style="left:16.0px;top:563.0px;width:970.0px;height:109.5px;background:#bfbfbf;border-top:1px solid #dedede;border-left:1px solid #d8d8d8;"></div>
<div class="" style="left:27.5px;top:600.0px;width:958.5px;height:63.4px;border:1px solid #8f8f8f;border-right:none;box-shadow:inset 1px 1px 0 #d8d8d8, 0 1px 0 #d8d8d8;"></div>
<span class="t" style="left:34.3px;top:574.4px;font-size:11px;line-height:13.2px;color:#161616;font-weight:normal;transform:scaleX(0.998);transform-origin:0 50%;">Material Length</span>
<span class="t" style="left:34.3px;top:587.8px;font-size:11px;line-height:13.2px;color:#161616;font-weight:normal;transform:scaleX(1.130);transform-origin:0 50%;">(mm)</span>
<div class="blue" style="left:36.0px;top:612.6px;width:78.6px;height:17.4px;"></div>
<span class="t" style="left:38.8px;top:615.4px;font-size:11px;line-height:13.2px;color:#fff;font-weight:normal;transform:scaleX(1.030);transform-origin:0 50%;">0.00</span>
<div class="blk" style="left:36.5px;top:637.5px;width:50.5px;height:16.0px;"></div>
<span class="t" style="left:39.0px;top:639.7px;font-size:11px;line-height:13.2px;color:#fff;font-weight:normal;transform:scaleX(1.030);transform-origin:0 50%;">0</span>
<div class="" style="left:91.0px;top:637.7px;width:6.5px;height:2.4px;background:rgba(255,255,255,0.45);border-radius:50%;filter:blur(0.6px);"></div>
<div class="ok" style="left:89.0px;top:635.7px;width:28.4px;height:18.1px;"></div>
<span class="t" style="left:3.6px;width:200px;text-align:center;top:640.3px;font-size:9px;line-height:10.8px;color:#0c2e0a;font-weight:bold;transform:scaleX(0.874);transform-origin:50% 50%;">OK</span>
<span class="t" style="left:136.7px;top:574.4px;font-size:11px;line-height:13.2px;color:#161616;font-weight:normal;transform:scaleX(1.005);transform-origin:0 50%;">Product Length</span>
<span class="t" style="left:136.7px;top:587.8px;font-size:11px;line-height:13.2px;color:#161616;font-weight:normal;transform:scaleX(1.094);transform-origin:0 50%;">TL (mm)</span>
<div class="blue" style="left:138.5px;top:612.6px;width:78.2px;height:17.4px;"></div>
<span class="t" style="left:141.3px;top:615.4px;font-size:11px;line-height:13.2px;color:#fff;font-weight:normal;transform:scaleX(1.030);transform-origin:0 50%;">0.00</span>
<div class="blk" style="left:138.5px;top:639.0px;width:50.0px;height:16.0px;"></div>
<span class="t" style="left:141.0px;top:641.2px;font-size:11px;line-height:13.2px;color:#fff;font-weight:normal;transform:scaleX(1.030);transform-origin:0 50%;">0</span>
<div class="" style="left:193.5px;top:639.2px;width:6.5px;height:2.4px;background:rgba(255,255,255,0.45);border-radius:50%;filter:blur(0.6px);"></div>
<div class="ok" style="left:191.5px;top:637.2px;width:27.8px;height:18.1px;"></div>
<span class="t" style="left:105.8px;width:200px;text-align:center;top:641.8px;font-size:9px;line-height:10.8px;color:#0c2e0a;font-weight:bold;transform:scaleX(0.874);transform-origin:50% 50%;">OK</span>
<span class="t" style="left:239.0px;top:574.4px;font-size:11px;line-height:13.2px;color:#161616;font-weight:normal;transform:scaleX(0.973);transform-origin:0 50%;">Welding Pressure</span>
<span class="t" style="left:239.0px;top:587.8px;font-size:11px;line-height:13.2px;color:#161616;font-weight:normal;transform:scaleX(1.057);transform-origin:0 50%;">P1 (kg/cm2)</span>
<div class="blue" style="left:240.0px;top:612.6px;width:87.3px;height:17.4px;"></div>
<span class="t" style="left:242.8px;top:615.4px;font-size:11px;line-height:13.2px;color:#fff;font-weight:normal;transform:scaleX(1.030);transform-origin:0 50%;">0.0</span>
<div class="blk" style="left:240.0px;top:638.0px;width:59.3px;height:16.0px;"></div>
<span class="t" style="left:242.5px;top:640.2px;font-size:11px;line-height:13.2px;color:#fff;font-weight:normal;transform:scaleX(1.030);transform-origin:0 50%;">0</span>
<div class="" style="left:304.3px;top:638.2px;width:6.5px;height:2.4px;background:rgba(255,255,255,0.45);border-radius:50%;filter:blur(0.6px);"></div>
<div class="ok" style="left:302.3px;top:636.2px;width:28.7px;height:18.1px;"></div>
<span class="t" style="left:217.0px;width:200px;text-align:center;top:640.8px;font-size:9px;line-height:10.8px;color:#0c2e0a;font-weight:bold;transform:scaleX(0.874);transform-origin:50% 50%;">OK</span>
<span class="t" style="left:350.0px;top:574.4px;font-size:11px;line-height:13.2px;color:#161616;font-weight:normal;transform:scaleX(0.980);transform-origin:0 50%;">Forging Pressure</span>
<span class="t" style="left:350.0px;top:587.8px;font-size:11px;line-height:13.2px;color:#161616;font-weight:normal;transform:scaleX(1.057);transform-origin:0 50%;">P2 (kg/cm2)</span>
<div class="blue" style="left:352.0px;top:612.6px;width:77.3px;height:17.4px;"></div>
<span class="t" style="left:354.8px;top:615.4px;font-size:11px;line-height:13.2px;color:#fff;font-weight:normal;transform:scaleX(1.030);transform-origin:0 50%;">0.0</span>
<div class="blk" style="left:352.0px;top:638.0px;width:49.0px;height:16.0px;"></div>
<span class="t" style="left:354.5px;top:640.2px;font-size:11px;line-height:13.2px;color:#fff;font-weight:normal;transform:scaleX(1.030);transform-origin:0 50%;">0</span>
<div class="" style="left:406.0px;top:638.2px;width:6.5px;height:2.4px;background:rgba(255,255,255,0.45);border-radius:50%;filter:blur(0.6px);"></div>
<div class="ok" style="left:404.0px;top:636.2px;width:28.3px;height:18.1px;"></div>
<span class="t" style="left:318.5px;width:200px;text-align:center;top:640.8px;font-size:9px;line-height:10.8px;color:#0c2e0a;font-weight:bold;transform:scaleX(0.874);transform-origin:50% 50%;">OK</span>
<span class="t" style="left:451.7px;top:574.4px;font-size:11px;line-height:13.2px;color:#161616;font-weight:normal;transform:scaleX(0.964);transform-origin:0 50%;">Spindle Speed</span>
<span class="t" style="left:451.7px;top:587.8px;font-size:11px;line-height:13.2px;color:#161616;font-weight:normal;transform:scaleX(1.089);transform-origin:0 50%;">N (rpm)</span>
<div class="blue" style="left:453.3px;top:612.6px;width:69.0px;height:17.4px;"></div>
<span class="t" style="left:456.1px;top:615.4px;font-size:11px;line-height:13.2px;color:#fff;font-weight:normal;transform:scaleX(1.030);transform-origin:0 50%;">0</span>
<div class="blk" style="left:453.5px;top:638.0px;width:40.8px;height:16.0px;"></div>
<span class="t" style="left:456.0px;top:640.2px;font-size:11px;line-height:13.2px;color:#fff;font-weight:normal;transform:scaleX(1.030);transform-origin:0 50%;">0</span>
<div class="" style="left:499.0px;top:638.2px;width:6.5px;height:2.4px;background:rgba(255,255,255,0.45);border-radius:50%;filter:blur(0.6px);"></div>
<div class="ok" style="left:497.0px;top:636.2px;width:28.0px;height:18.1px;"></div>
<span class="t" style="left:411.4px;width:200px;text-align:center;top:640.8px;font-size:9px;line-height:10.8px;color:#0c2e0a;font-weight:bold;transform:scaleX(0.874);transform-origin:50% 50%;">OK</span>
<span class="t" style="left:544.3px;top:574.4px;font-size:11px;line-height:13.2px;color:#161616;font-weight:normal;transform:scaleX(1.026);transform-origin:0 50%;">Welding Burn off</span>
<span class="t" style="left:544.3px;top:587.8px;font-size:11px;line-height:13.2px;color:#161616;font-weight:normal;transform:scaleX(1.085);transform-origin:0 50%;">U1 (mm)</span>
<div class="blue" style="left:546.0px;top:612.6px;width:78.3px;height:17.4px;"></div>
<span class="t" style="left:548.8px;top:615.4px;font-size:11px;line-height:13.2px;color:#fff;font-weight:normal;transform:scaleX(1.030);transform-origin:0 50%;">0.00</span>
<div class="blk" style="left:546.0px;top:638.0px;width:50.0px;height:16.0px;"></div>
<span class="t" style="left:548.5px;top:640.2px;font-size:11px;line-height:13.2px;color:#fff;font-weight:normal;transform:scaleX(1.030);transform-origin:0 50%;">0</span>
<div class="" style="left:601.3px;top:638.2px;width:6.5px;height:2.4px;background:rgba(255,255,255,0.45);border-radius:50%;filter:blur(0.6px);"></div>
<div class="ok" style="left:599.3px;top:636.2px;width:27.7px;height:18.1px;"></div>
<span class="t" style="left:513.5px;width:200px;text-align:center;top:640.8px;font-size:9px;line-height:10.8px;color:#0c2e0a;font-weight:bold;transform:scaleX(0.874);transform-origin:50% 50%;">OK</span>
<span class="t" style="left:646.0px;top:574.4px;font-size:11px;line-height:13.2px;color:#161616;font-weight:normal;transform:scaleX(1.033);transform-origin:0 50%;">Forging Burn off</span>
<span class="t" style="left:646.0px;top:587.8px;font-size:11px;line-height:13.2px;color:#161616;font-weight:normal;transform:scaleX(1.090);transform-origin:0 50%;">U2(mm)</span>
<div class="blue" style="left:648.0px;top:612.6px;width:78.0px;height:17.4px;"></div>
<span class="t" style="left:650.8px;top:615.4px;font-size:11px;line-height:13.2px;color:#fff;font-weight:normal;transform:scaleX(1.030);transform-origin:0 50%;">0.00</span>
<span class="t" style="left:748.3px;top:574.4px;font-size:11px;line-height:13.2px;color:#161616;font-weight:normal;transform:scaleX(1.004);transform-origin:0 50%;">Welding Time</span>
<span class="t" style="left:748.3px;top:587.8px;font-size:11px;line-height:13.2px;color:#161616;font-weight:normal;transform:scaleX(1.079);transform-origin:0 50%;">T1 (s)</span>
<div class="blue" style="left:750.0px;top:612.6px;width:68.3px;height:17.4px;"></div>
<span class="t" style="left:752.8px;top:615.4px;font-size:11px;line-height:13.2px;color:#fff;font-weight:normal;transform:scaleX(1.030);transform-origin:0 50%;">0.00</span>
<div class="blk" style="left:750.5px;top:639.0px;width:40.5px;height:15.5px;"></div>
<span class="t" style="left:753.0px;top:641.0px;font-size:11px;line-height:13.2px;color:#fff;font-weight:normal;transform:scaleX(1.030);transform-origin:0 50%;">0</span>
<div class="" style="left:796.0px;top:639.2px;width:6.5px;height:2.4px;background:rgba(255,255,255,0.45);border-radius:50%;filter:blur(0.6px);"></div>
<div class="ok" style="left:794.0px;top:637.2px;width:28.0px;height:17.6px;"></div>
<span class="t" style="left:708.4px;width:200px;text-align:center;top:641.6px;font-size:9px;line-height:10.8px;color:#0c2e0a;font-weight:bold;transform:scaleX(0.874);transform-origin:50% 50%;">OK</span>
<span class="t" style="left:841.7px;top:587.8px;font-size:11px;line-height:13.2px;color:#161616;font-weight:normal;transform:scaleX(0.958);transform-origin:0 50%;">T0</span>
<div class="blue" style="left:843.0px;top:613.0px;width:40.3px;height:15.3px;"></div>
<span class="t" style="left:845.8px;top:614.9px;font-size:11px;line-height:13.2px;color:#fff;font-weight:normal;transform:scaleX(1.030);transform-origin:0 50%;">0</span>
<span class="t" style="left:888.3px;top:587.8px;font-size:11px;line-height:13.2px;color:#161616;font-weight:normal;transform:scaleX(0.958);transform-origin:0 50%;">T1</span>
<div class="blue" style="left:889.3px;top:613.0px;width:40.7px;height:15.3px;"></div>
<span class="t" style="left:892.1px;top:614.9px;font-size:11px;line-height:13.2px;color:#fff;font-weight:normal;transform:scaleX(1.030);transform-origin:0 50%;">0</span>
<span class="t" style="left:934.0px;top:587.8px;font-size:11px;line-height:13.2px;color:#161616;font-weight:normal;transform:scaleX(0.958);transform-origin:0 50%;">T2</span>
<div class="blue" style="left:935.5px;top:613.0px;width:40.7px;height:15.3px;"></div>
<span class="t" style="left:938.3px;top:614.9px;font-size:11px;line-height:13.2px;color:#fff;font-weight:normal;transform:scaleX(1.030);transform-origin:0 50%;">0</span>
<div class="" style="left:836.0px;top:635.4px;width:134.0px;height:18.6px;background:linear-gradient(#8ed85a 0%,#55bd30 30%,#45ad27 60%,#358f1d 100%);"></div>
<span class="t" style="left:803.3px;width:200px;text-align:center;top:639.6px;font-size:9px;line-height:10.8px;color:#0c2e0a;font-weight:bold;transform:scaleX(0.889);transform-origin:50% 50%;">OK</span>
<div class="" style="left:840.0px;top:638.3px;width:46.0px;height:3.3px;background:linear-gradient(90deg,rgba(255,255,255,0.6),rgba(255,255,255,0.5) 60%,rgba(255,255,255,0));border-radius:50%;filter:blur(0.7px);"></div>
</div></body></html>
